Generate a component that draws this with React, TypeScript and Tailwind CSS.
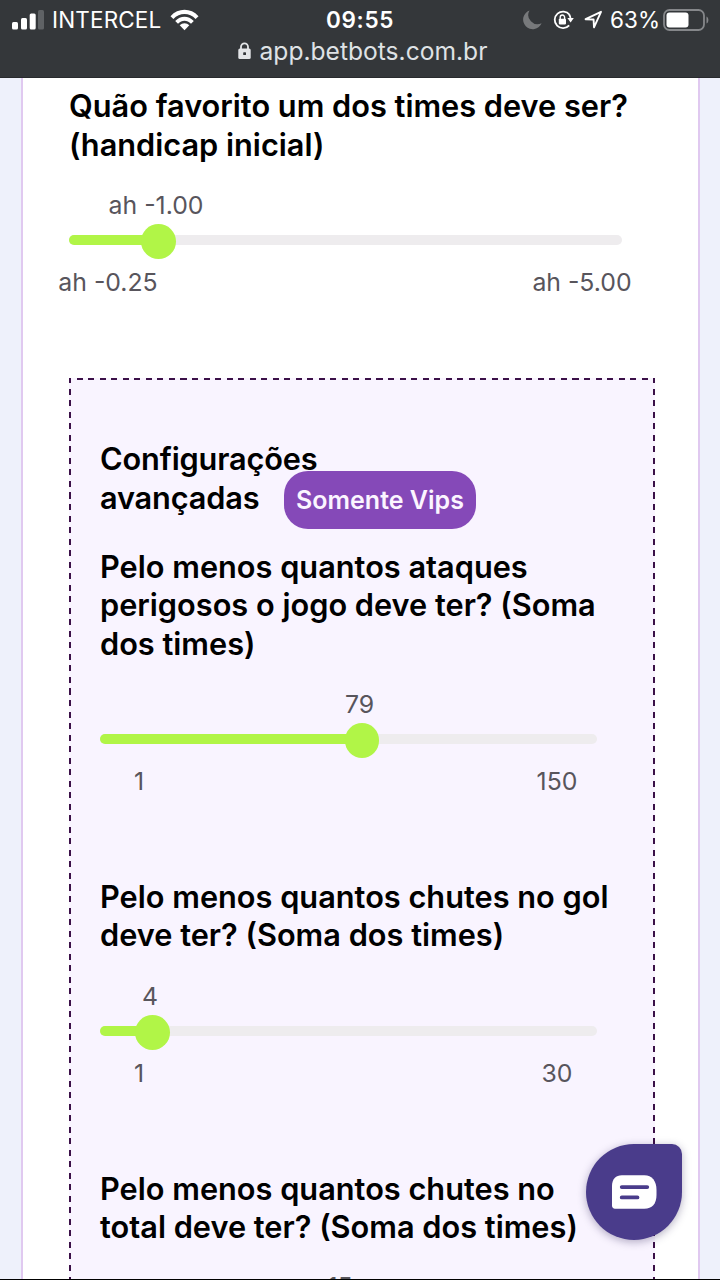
import React from 'react';

type SliderProps = {
  value: string;
  min?: string;
  max?: string;
  // knob centre, px from the start of the track
  position: number;
};

const Slider: React.FC<SliderProps> = ({ value, min, max, position }) => (
  <div className="h-[215px] pt-[22px] text-[24.8px] leading-[38px] font-normal text-[#58555c]">
    <div className="flex h-[38px]">
      <div className="flex w-0 justify-center whitespace-nowrap" style={{ marginLeft: position - 2 }}>
        {value}
      </div>
    </div>
    <div className="mt-[11px] flex h-[10px] items-center rounded-full bg-[#eeecee]">
      <div className="h-[10px] shrink-0 rounded-l-full bg-[#b1f547]" style={{ width: position }}></div>
      <div className="-ml-[17px] mt-[3px] size-[34.5px] shrink-0 rounded-full bg-[#b1f547]"></div>
    </div>
    {min && max && (
      <div className="mt-[18px] flex justify-between whitespace-nowrap">
        <span className="flex w-[78px] justify-center">{min}</span>
        <span className="flex w-[80px] justify-center">{max}</span>
      </div>
    )}
  </div>
);

const Title: React.FC<{ lines: string[] }> = ({ lines }) => (
  <h2 className="text-[30.72px] leading-[38.4px] font-semibold whitespace-nowrap text-black">
    {lines.map((line) => (
      <span key={line} className="block">{line}</span>
    ))}
  </h2>
);

const StatusBar: React.FC = () => (
  <header className="h-[78px] shrink-0 border-b border-[#282a2d] bg-[#34373a] text-white">
    <div className="grid h-[39px] grid-cols-3 items-center">
      <div className="flex items-center pl-[12px]">
        <svg width="33" height="20" viewBox="0 0 33 20">
          <rect x="0" y="12" width="6" height="7.5" rx="1.5" fill="#fff" />
          <rect x="9" y="8" width="6" height="11.5" rx="1.5" fill="#fff" />
          <rect x="17.7" y="3.5" width="6" height="16" rx="1.5" fill="#fff" />
          <rect x="26" y="0" width="6" height="19.5" rx="1.5" fill="#5f6265" />
        </svg>
        <span className="ml-[7px] text-[22.5px] tracking-[0.15px]">INTERCEL</span>
        <svg className="ml-[9px]" width="29" height="22" viewBox="0 0 29 22">
          <path d="M0.5 7.2C8.2-1.3 20.8-1.3 28.5 7.2L25.6 10.1C19.5 3.4 9.5 3.4 3.4 10.1Z" fill="#fff" />
          <path d="M5.2 11.9C10.4 6.2 18.6 6.2 23.8 11.9L21 14.7C17.2 10.8 11.8 10.8 8 14.7Z" fill="#fff" />
          <path d="M9.7 16.3C12.4 13.5 16.6 13.5 19.3 16.3L14.5 21.2Z" fill="#fff" />
        </svg>
      </div>
      <div className="text-center text-[22.5px] font-semibold tracking-[0.7px]">09:55</div>
      <div className="flex items-center justify-end pr-[11px]">
        <svg width="19" height="20" viewBox="0 0 19 20">
          <path d="M6.5 0.5A9.6 9.6 0 1 0 18.6 13.2A9.2 9.2 0 0 1 6.5 0.5Z" fill="#77797b" />
        </svg>
        <svg className="ml-[11px]" width="21" height="20" viewBox="0 0 21 20">
          <path d="M16.6 4.8A8.3 8.3 0 1 0 16.2 15.4" fill="none" stroke="#fff" strokeWidth="1.8" />
          <path d="M16.2 4.4A8.3 8.3 0 0 1 17.6 9" fill="none" stroke="#fff" strokeWidth="1.8" />
          <path d="M14.4 8H20.8L17.6 12.6Z" fill="#fff" />
          <rect x="5.8" y="8.8" width="7.2" height="5.6" rx="0.8" fill="#fff" />
          <path d="M7.2 9V7.2a2.2 2.2 0 0 1 4.4 0V9" fill="none" stroke="#fff" strokeWidth="1.4" />
        </svg>
        <svg className="ml-[10px]" width="19" height="19" viewBox="0 0 19 19">
          <path d="M1.6 9.2L17 1.8L10 17.3L9.6 9.5Z" fill="none" stroke="#fff" strokeWidth="1.9" strokeLinejoin="round" />
        </svg>
        <span className="ml-[7px] text-[22.5px]">63%</span>
        <svg className="ml-[3px]" width="46" height="22" viewBox="0 0 46 22">
          <rect x="1" y="1" width="40" height="20" rx="5.5" fill="none" stroke="#85878a" strokeWidth="1.8" />
          <rect x="3.5" y="3.5" width="22" height="15" rx="3" fill="#fff" />
          <path d="M43.5 7.5C46 8.5 46 13.5 43.5 14.5Z" fill="#85878a" />
        </svg>
      </div>
    </div>
    <div className="flex items-center justify-center pl-[5px] text-[#dfe2e5]">
      <svg width="13" height="18" viewBox="0 0 13 18">
        <rect x="0.3" y="6.5" width="12.4" height="10.5" rx="1.6" fill="#e4e6e8" />
        <path d="M3 7V4.8a3.5 3.5 0 0 1 7 0V7" fill="none" stroke="#e4e6e8" strokeWidth="1.8" />
        <rect x="5.2" y="10.3" width="2.8" height="2.8" rx="0.6" fill="#34373a" />
      </svg>
      <span className="ml-[9px] text-[24.6px] leading-[24px]">app.betbots.com.br</span>
    </div>
  </header>
);

const ChatButton: React.FC = () => (
  <button
    type="button"
    className="absolute top-[1144px] left-[586px] flex size-[96px] items-center justify-center rounded-[48px] rounded-tr-[10px] bg-[#4a3c8b] shadow-[0_2px_8px_rgba(40,30,80,0.35)]"
  >
    <svg className="ml-px" width="45" height="34" viewBox="0 0 46 34">
      <path d="M10 0H33C41 0 45.500 6 45.500 15V20C45.500 29 41 34 33 34H3C1.300 34 0 32.700 0 31V11C0 4 4 0 10 0Z" fill="#fff" />
      <path d="M10 12H36M10 22.500H26" stroke="#4a3c8b" strokeWidth="4" strokeLinecap="round" />
    </svg>
  </button>
);

export default function App() {
  return (
    <div className="relative flex h-[1280px] w-[720px] flex-col overflow-hidden border-b border-black bg-[#eef1fb] font-['Inter',sans-serif]">
      <StatusBar />

      <main className="ml-[21px] min-h-0 w-[679px] flex-1 border-x-2 border-[#e0c9f0] bg-white pt-[9.4px] pl-[46px]">
        <Title lines={['Quão favorito um dos times deve ser?', '(handicap inicial)']} />
        <div className="w-[553px]">
          <Slider value="ah -1.00" min="ah -0.25" max="ah -5.00" position={89} />
        </div>

        {/* Advanced settings, dashed frame */}
        <section className="-mt-[1.4px] h-[920px] w-[586px] bg-[#f9f4ff] bg-[image:repeating-linear-gradient(to_right,#3b1048_0_2.2px,transparent_2.2px_7.7px,#3b1048_7.7px_11.53px),repeating-linear-gradient(to_bottom,#3b1048_0_5.2px,transparent_5.2px_10.7px,#3b1048_10.7px_11.53px),repeating-linear-gradient(to_bottom,#3b1048_0_5.2px,transparent_5.2px_10.7px,#3b1048_10.7px_11.53px)] [background-position:0_0,0_0,100%_0] [background-size:100%_2px,2px_100%,2px_100%] bg-no-repeat pt-[62.6px] pl-[31px]">
          <div className="flex h-[107.4px] items-start">
            <div className="w-[184px] tracking-[-0.15px]">
              <Title lines={['Configurações', 'avançadas']} />
            </div>
            <span className="mt-[30.4px] flex h-[58px] w-[192px] items-center justify-center rounded-[24px] bg-[#8549b8] pt-px text-[25px] font-semibold whitespace-nowrap text-[#fbf5ff]">
              Somente Vips
            </span>
          </div>

          <div className="w-[497px]">
            <Title lines={['Pelo menos quantos ataques', 'perigosos o jogo deve ter? (Soma', 'dos times)']} />
            <Slider value="79" min="1" max="150" position={261.5} />
            <Title lines={['Pelo menos quantos chutes no gol', 'deve ter? (Soma dos times)']} />
            <Slider value="4" min="1" max="30" position={52} />
            <Title lines={['Pelo menos quantos chutes no', 'total deve ter? (Soma dos times)']} />
            <div className="-mt-[2px]">
              <Slider value="15" position={242} />
            </div>
          </div>
        </section>
      </main>

      <ChatButton />
    </div>
  );
}
